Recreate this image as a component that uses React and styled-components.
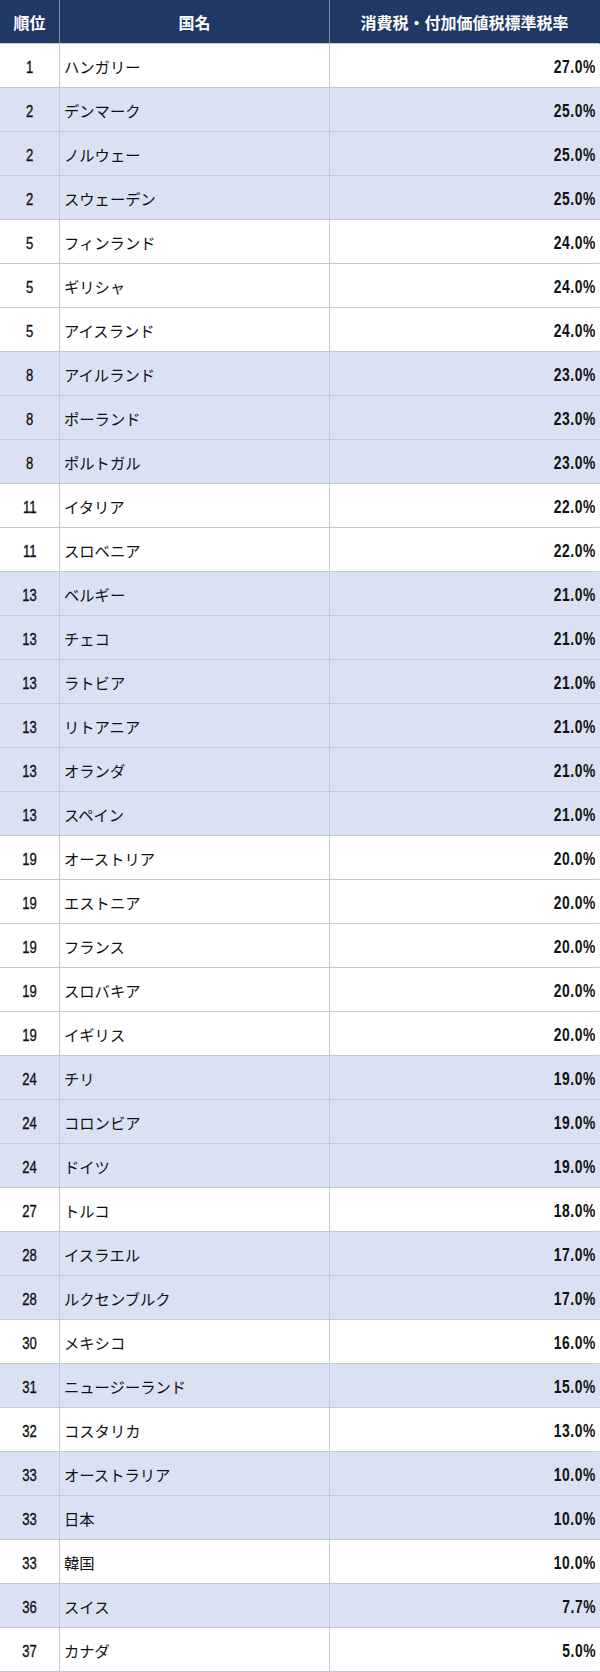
import React from 'react';
import styled, { createGlobalStyle } from 'styled-components';

const GlobalStyle = createGlobalStyle`
  html, body {
    margin: 0;
    padding: 0;
    background: #ffffff;
  }
  body {
    font-family: "Noto Sans CJK JP", "Noto Sans", sans-serif;
  }
`;

const rows = [
  { rank: 1, name: 'ハンガリー', rate: '27.0%', shaded: false },
  { rank: 2, name: 'デンマーク', rate: '25.0%', shaded: true },
  { rank: 2, name: 'ノルウェー', rate: '25.0%', shaded: true },
  { rank: 2, name: 'スウェーデン', rate: '25.0%', shaded: true },
  { rank: 5, name: 'フィンランド', rate: '24.0%', shaded: false },
  { rank: 5, name: 'ギリシャ', rate: '24.0%', shaded: false },
  { rank: 5, name: 'アイスランド', rate: '24.0%', shaded: false },
  { rank: 8, name: 'アイルランド', rate: '23.0%', shaded: true },
  { rank: 8, name: 'ポーランド', rate: '23.0%', shaded: true },
  { rank: 8, name: 'ポルトガル', rate: '23.0%', shaded: true },
  { rank: 11, name: 'イタリア', rate: '22.0%', shaded: false },
  { rank: 11, name: 'スロベニア', rate: '22.0%', shaded: false },
  { rank: 13, name: 'ベルギー', rate: '21.0%', shaded: true },
  { rank: 13, name: 'チェコ', rate: '21.0%', shaded: true },
  { rank: 13, name: 'ラトビア', rate: '21.0%', shaded: true },
  { rank: 13, name: 'リトアニア', rate: '21.0%', shaded: true },
  { rank: 13, name: 'オランダ', rate: '21.0%', shaded: true },
  { rank: 13, name: 'スペイン', rate: '21.0%', shaded: true },
  { rank: 19, name: 'オーストリア', rate: '20.0%', shaded: false },
  { rank: 19, name: 'エストニア', rate: '20.0%', shaded: false },
  { rank: 19, name: 'フランス', rate: '20.0%', shaded: false },
  { rank: 19, name: 'スロバキア', rate: '20.0%', shaded: false },
  { rank: 19, name: 'イギリス', rate: '20.0%', shaded: false },
  { rank: 24, name: 'チリ', rate: '19.0%', shaded: true },
  { rank: 24, name: 'コロンビア', rate: '19.0%', shaded: true },
  { rank: 24, name: 'ドイツ', rate: '19.0%', shaded: true },
  { rank: 27, name: 'トルコ', rate: '18.0%', shaded: false },
  { rank: 28, name: 'イスラエル', rate: '17.0%', shaded: true },
  { rank: 28, name: 'ルクセンブルク', rate: '17.0%', shaded: true },
  { rank: 30, name: 'メキシコ', rate: '16.0%', shaded: false },
  { rank: 31, name: 'ニュージーランド', rate: '15.0%', shaded: true },
  { rank: 32, name: 'コスタリカ', rate: '13.0%', shaded: false },
  { rank: 33, name: 'オーストラリア', rate: '10.0%', shaded: true },
  { rank: 33, name: '日本', rate: '10.0%', shaded: true },
  { rank: 33, name: '韓国', rate: '10.0%', shaded: false },
  { rank: 36, name: 'スイス', rate: '7.7%', shaded: true },
  { rank: 37, name: 'カナダ', rate: '5.0%', shaded: false },
];

const Table = styled.div`
  width: 600px;
  display: grid;
  grid-template-columns: 60px 270px 270px;
  border-right: 1px solid #c4c8d0;
  box-sizing: border-box;
`;

const HeadCell = styled.div`
  height: 44px;
  box-sizing: border-box;
  background: #1f3864;
  color: #ffffff;
  font-size: 16px;
  font-weight: 700;
  display: flex;
  align-items: center;
  justify-content: center;
  border-right: 1px solid ${(p) => (p.$last ? '#1f3864' : '#7d8fad')};
  border-bottom: 1px solid #c4c8d0;
  white-space: nowrap;
`;

const Cell = styled.div`
  height: 44px;
  box-sizing: border-box;
  background: ${(p) => (p.$shaded ? '#d9e1f2' : '#ffffff')};
  color: #111111;
  display: flex;
  align-items: center;
  border-right: 1px solid ${(p) => (p.$last ? 'transparent' : '#c4c8d0')};
  border-bottom: 1px solid #c4c8d0;
  white-space: nowrap;
`;

const RankCell = styled(Cell)`
  justify-content: center;
`;

const NameCell = styled(Cell)`
  padding-left: 4px;
  font-size: 15.3px;
`;

const RateCell = styled(Cell)`
  justify-content: flex-end;
  padding-right: 3px;
`;

// narrow digits, as in the spreadsheet font
const Digits = styled.span`
  display: inline-block;
  margin-top: 3px;
  line-height: 1;
  font-family: "Liberation Sans", Arial, sans-serif;
  font-size: ${(p) => (p.$bold ? '18px' : '17px')};
  font-weight: ${(p) => (p.$bold ? 700 : 400)};
  letter-spacing: ${(p) => (p.$bold ? '0.8px' : '0')};
  -webkit-text-stroke: ${(p) => (p.$bold ? '0' : '0.35px #111111')};
  transform: scaleX(0.77);
  transform-origin: ${(p) => (p.$bold ? 'right center' : 'center')};
`;

export default function App() {
  return (
    <>
      <GlobalStyle />
      <Table>
        <HeadCell>順位</HeadCell>
        <HeadCell>国名</HeadCell>
        <HeadCell $last>消費税・付加価値税標準税率</HeadCell>
        {rows.map((r) => (
          <React.Fragment key={r.name}>
            <RankCell $shaded={r.shaded}>
              <Digits>{r.rank}</Digits>
            </RankCell>
            <NameCell $shaded={r.shaded}>{r.name}</NameCell>
            <RateCell $shaded={r.shaded} $last>
              <Digits $bold>{r.rate}</Digits>
            </RateCell>
          </React.Fragment>
        ))}
      </Table>
    </>
  );
}
